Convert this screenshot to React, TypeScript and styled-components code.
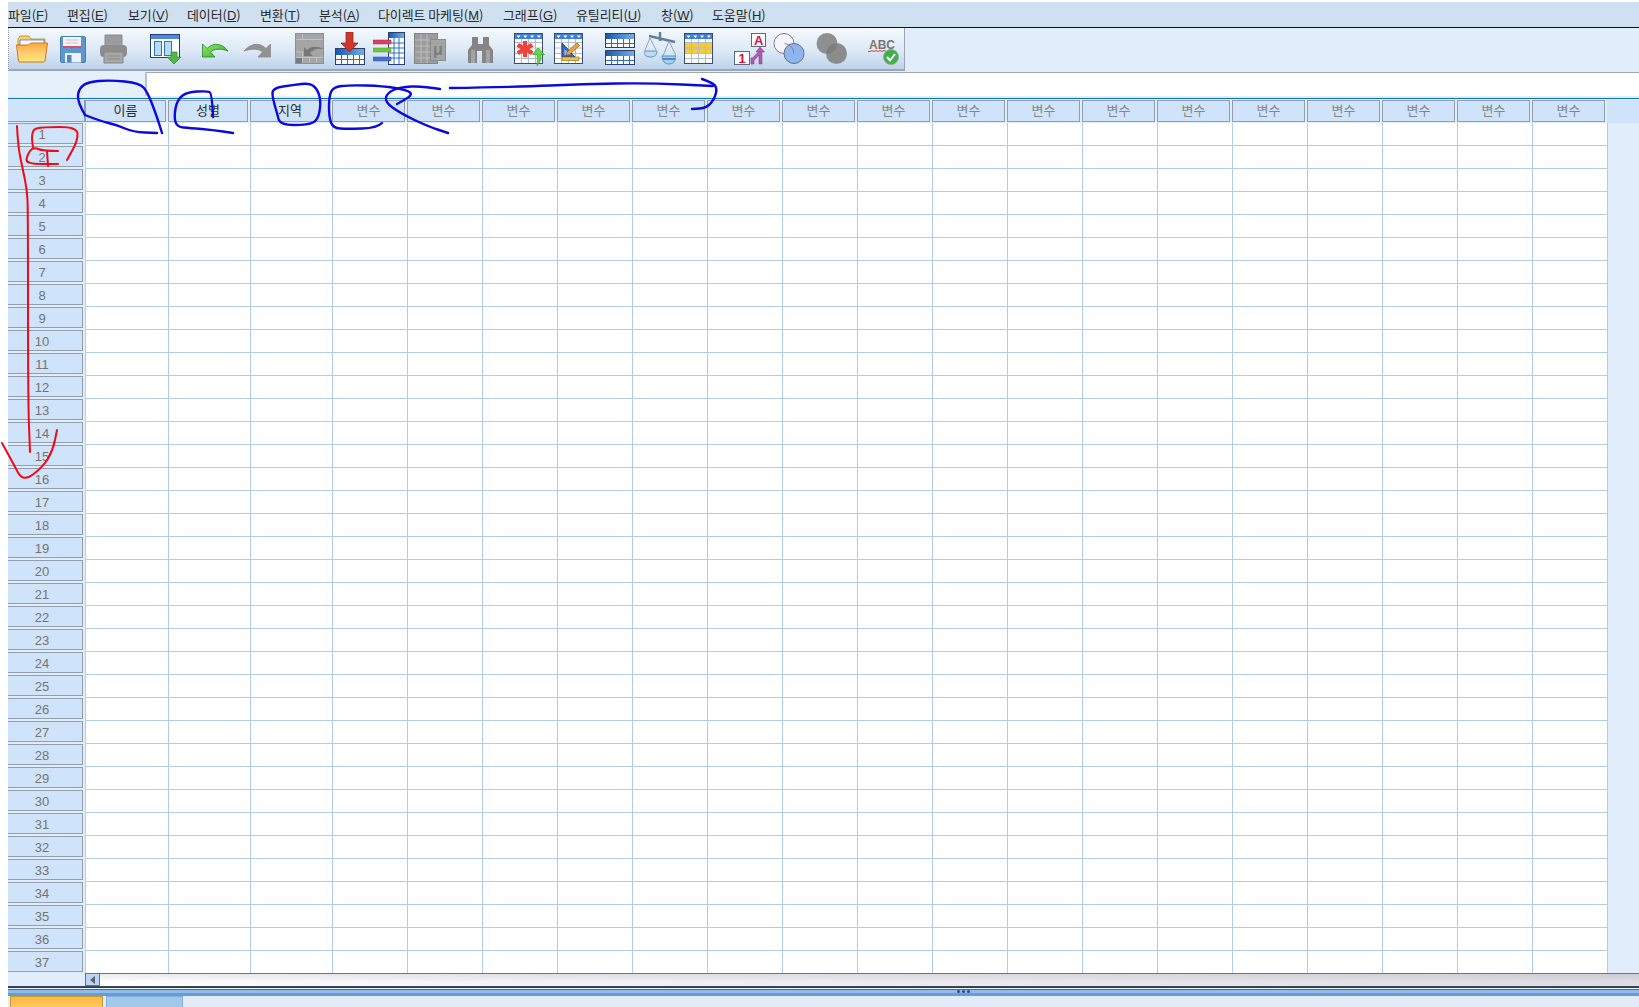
import React from "react";
import styled, { createGlobalStyle } from "styled-components";

const GlobalStyle = createGlobalStyle`
  html, body {
    margin: 0;
    padding: 0;
    background: #fff;
    overflow: hidden;
  }
`;

const KR = `"Noto Sans CJK KR", "Noto Sans", sans-serif`;

const MENUS: [string, string, number][] = [
  ["파일", "F", 59],
  ["편집", "E", 61],
  ["보기", "V", 59],
  ["데이터", "D", 73],
  ["변환", "T", 59],
  ["분석", "A", 59],
  ["다이렉트 마케팅", "M", 125],
  ["그래프", "G", 73],
  ["유틸리티", "U", 85],
  ["창", "W", 51],
  ["도움말", "H", 73],
];

const COLUMNS = [
  { label: "이름", width: 83, named: true },
  { label: "성별", width: 82, named: true },
  { label: "지역", width: 82, named: true },
  ...Array.from({ length: 17 }, () => ({ label: "변수", width: 75, named: false })),
];

const ROWS = Array.from({ length: 37 }, (_, i) => i + 1);

// 손으로 그린 주석 선을 부드럽게 이어준다
function stroke(points: number[][]) {
  let d = `M${points[0][0]} ${points[0][1]}`;
  for (let i = 1; i < points.length - 1; i++) {
    const mx = (points[i][0] + points[i + 1][0]) / 2;
    const my = (points[i][1] + points[i + 1][1]) / 2;
    d += ` Q${points[i][0]} ${points[i][1]} ${mx} ${my}`;
  }
  const last = points[points.length - 1];
  return `${d} L${last[0]} ${last[1]}`;
}

const BLUE_MARKS = [
  [[85,115],[78,103],[78,90],[87,82],[110,80],[140,83],[148,93],[157,117],[162,133]],
  [[85,115],[100,121],[117,125],[133,132],[157,133]],
  [[213,117],[212,93],[207,91],[187,92],[177,100],[174,117],[177,127],[190,128],[213,130],[233,133]],
  [[277,113],[272,97],[273,88],[293,85],[310,83],[318,90],[321,103],[318,120],[308,125],[280,125],[277,113]],
  [[382,123],[377,128],[347,129],[333,128],[329,117],[329,97],[333,87],[350,85],[383,86],[407,90],[413,95],[397,104]],
  [[440,89],[423,86],[400,87],[387,93],[385,102],[400,113],[427,126],[448,133]],
  [[450,88],[517,87],[583,84],[650,83],[713,86]],
  [[702,79],[713,83],[717,88],[715,98],[707,108],[692,109]],
];

const RED_MARKS = [
  [[33,147],[30,130],[43,127],[77,127],[78,140],[67,160]],
  [[58,151],[43,151],[33,147],[27,155],[26,164],[58,164]],
  [[47,151],[48,166]],
  [[17,126],[18,147],[23,170],[27,190],[28,210],[28,400],[30,452]],
  [[2,443],[13,463],[23,482],[43,467],[53,450],[57,430]],
];

const Page = styled.div`
  position: relative;
  width: 1639px;
  height: 1007px;
  padding: 2px 0 0 8px;
  box-sizing: border-box;
  display: flex;
  flex-direction: column;
  overflow: hidden;
  background: #fff;
`;

const MenuBar = styled.div`
  height: 25px;
  display: flex;
  align-items: center;
  background: #cfe0f1;
  border-bottom: 1px solid #111;
  flex: none;
`;

const MenuItem = styled.div<{ $w: number }>`
  width: ${(p) => p.$w}px;
  flex: none;
  font: 13px ${KR};
  letter-spacing: -0.1px;
  color: #2a2a2a;
  white-space: nowrap;
  line-height: 25px;
`;

const Mnemonic = styled.span`
  text-decoration: underline;
  font-family: "Liberation Sans", sans-serif;
`;

const ToolbarRow = styled.div`
  height: 44px;
  display: flex;
  align-items: flex-start;
  flex: none;
  background: #e1edfb;
`;

const Toolbar = styled.div`
  width: 897px;
  height: 43px;
  display: flex;
  align-items: center;
  padding-left: 7px;
  box-sizing: border-box;
  background: linear-gradient(#f4f9fe 0%, #dde9f6 55%, #bcd3eb 100%);
  border-right: 1px solid #9aa5b1;
  border-bottom: 2px solid #9ea7b1;
  border-left: 1px dotted #9aa5b1;
`;

const ToolIcon = styled.svg<{ $gap: number }>`
  width: 32px;
  height: 34px;
  flex: none;
  margin-left: ${(p) => p.$gap}px;
`;

const IconText = styled.text<{ $size: number; $color: string }>`
  font: bold ${(p) => p.$size}px "Liberation Sans", sans-serif;
  fill: ${(p) => p.$color};
`;

const EditorRow = styled.div`
  height: 26px;
  display: flex;
  flex: none;
`;

const CellLabel = styled.div`
  width: 137px;
  background: #e6f0fb;
  border-right: 2px solid #b9c2cc;
`;

const CellInput = styled.div`
  flex: 1;
  background: #fff;
  border-top: 1px solid #9ea7b1;
`;

const Sheet = styled.div`
  flex: none;
  display: flex;
  flex-direction: column;
  background: #e1edfb;
  border-top: 1px solid #0a6fc9;
  box-shadow: 0 -2px 0 #e2eefb;
`;

const HeaderRow = styled.div`
  display: flex;
  height: 24px;
  padding-top: 1px;
  box-sizing: border-box;
  flex: none;
`;

const Corner = styled.div`
  width: 77px;
  height: 22px;
  box-sizing: border-box;
  background: #cfe3fb;
  border-right: 1px solid #8f99a6;
  border-bottom: 1px solid #8f99a6;
  flex: none;
`;

const ColumnHead = styled.div<{ $w: number; $named: boolean }>`
  width: ${(p) => p.$w - 2}px;
  height: 22px;
  margin-right: 2px;
  padding-bottom: 2px;
  box-sizing: border-box;
  flex: none;
  display: flex;
  align-items: center;
  justify-content: center;
  background: #cfe3fb;
  border: 1px solid #939dab;
  font: 13px ${KR};
  line-height: 18px;
  color: ${(p) => (p.$named ? "#2c2c2c" : "#868686")};
`;

const HeadFiller = styled.div`
  flex: 1;
  height: 23px;
  background: #cfe3fb;
`;

const Row = styled.div`
  display: flex;
  height: 23px;
  flex: none;
`;

const RowHead = styled.div`
  width: 75px;
  height: 21px;
  padding: 2px 6px 0 0;
  box-sizing: border-box;
  flex: none;
  display: flex;
  align-items: center;
  justify-content: center;
  background: #cfe3fb;
  border: 1px solid #939dab;
  border-left: none;
  font: 13px "Liberation Sans", sans-serif;
  color: #747474;
`;

const RowGutter = styled.div`
  width: 2px;
  flex: none;
  border-right: 1px solid #b5d0ec;
`;

const Cell = styled.div<{ $w: number }>`
  width: ${(p) => p.$w}px;
  box-sizing: border-box;
  flex: none;
  background: #fff;
  border-right: 1px solid #b0cdea;
  border-bottom: 1px solid #b0cdea;
`;

const ScrollRow = styled.div`
  height: 12px;
  display: flex;
  flex: none;
  border-bottom: 1px solid #3d4a5c;
`;

const ScrollGutter = styled.div`
  width: 77px;
  flex: none;
`;

const ScrollArrow = styled.div`
  width: 15px;
  flex: none;
  box-sizing: border-box;
  background: #b9d4f5;
  border: 1px solid #2a7fd0;
  border-top: none;
  box-shadow: 0 -1px 0 #2a86dd;
  display: flex;
  align-items: center;
  justify-content: center;
  &::before {
    content: "";
    border-style: solid;
    border-width: 4px 5px 4px 0;
    border-color: transparent #5b6168 transparent transparent;
  }
`;

const ScrollTrack = styled.div`
  flex: 1;
  box-shadow: 0 -1px 0 #2a86dd;
  background:
    linear-gradient(rgba(120, 110, 130, 0.14), rgba(255, 255, 255, 0) 70%),
    linear-gradient(90deg, #fff 0%, #f4f3f5 25%, #dedbe3 100%);
`;

const Splitter = styled.div`
  position: relative;
  height: 9px;
  flex: none;
  background: linear-gradient(
    #16406f 0 1px,
    #f4f8fd 1px 2px,
    #0a7bdc 2px 3px,
    #8dbcee 3px 6px,
    #6c9bd2 6px 9px
  );
`;

const SplitDots = styled.div`
  position: absolute;
  left: 949px;
  top: 3px;
  width: 3px;
  height: 3px;
  border-radius: 50%;
  background: #2a4f96;
  box-shadow: 5px 0 0 #2a4f96, 10px 0 0 #2a4f96;
`;

const TabBar = styled.div`
  flex: 1;
  display: flex;
  gap: 3px;
  padding-left: 2px;
  align-items: flex-end;
  background: #e2ecf8;
`;

const Tab = styled.div<{ $active?: boolean }>`
  width: ${(p) => (p.$active ? 93 : 77)}px;
  height: 11px;
  box-sizing: border-box;
  background: ${(p) => (p.$active ? "linear-gradient(#ffb93f, #ffca63)" : "#a4c8e9")};
  border: 1px solid ${(p) => (p.$active ? "#c9972f" : "#7fb0e0")};
  border-bottom: none;
`;

const Marks = styled.svg`
  position: absolute;
  left: 0;
  top: 0;
  pointer-events: none;
`;

const MiniSheet = ({ hl }: { hl?: boolean }) => (
  <g>
    <rect x="1.500" y="1.500" width="28" height="30" fill="#fff" stroke="#3b4c6e" />
    {hl && <rect x="2" y="10" width="27" height="11" fill="#f5cc34" />}
    <path d="M2 10.500h27M2 16h27M2 21.500h27M2 26.500h27M8.500 7v24M15.500 7v24M22.500 7v24" stroke="#b4bbc6" fill="none" />
    <rect x="2" y="2" width="27" height="5" fill="#3f7fd6" />
    {[0, 1, 2, 3].map((i) => (
      <path key={i} d={`M${3.5 + i * 6.8} 3.500h4l-2 2.500z`} fill="#fff" />
    ))}
  </g>
);

const BlueTable = ({ y }: { y: number }) => (
  <g>
    <rect x="1.500" y={y + 0.5} width="29" height="14" fill="#fff" stroke="#2b3f70" />
    <rect x="2" y={y + 1} width="28" height="5" fill="url(#tableHead)" />
    <path
      d={`M2 ${y + 10.5}h28M7.500 ${y + 6}v8M13.500 ${y + 6}v8M19.500 ${y + 6}v8M25.500 ${y + 6}v8`}
      stroke="#2b6fc4"
      fill="none"
    />
  </g>
);

const ToolStrip = () => (
  <Toolbar>
    {/* 열기 */}
    <ToolIcon $gap={0} viewBox="0 0 32 34">
      <defs>
        <linearGradient id="folder" x1="0" y1="0" x2="0" y2="1">
          <stop offset="0" stopColor="#fda83c" />
          <stop offset=".6" stopColor="#ffd07a" />
          <stop offset="1" stopColor="#ffe96a" />
        </linearGradient>
        <linearGradient id="tableHead" x1="0" y1="0" x2="1" y2="0">
          <stop offset="0" stopColor="#1659ad" />
          <stop offset="1" stopColor="#74aee6" />
        </linearGradient>
      </defs>
      <path d="M2 7l2-3h9l2 3h14v6H2z" fill="#f7d070" stroke="#b98a28" strokeWidth=".8" />
      <path d="M4 8h24v6H4z" fill="#fff" stroke="#4f7fc0" strokeWidth=".8" />
      <path d="M0.500 13h12l2-2h17l-2.500 18a1.500 1.500 0 0 1-1.500 1H4a1.500 1.500 0 0 1-1.500-1z" fill="url(#folder)" stroke="#c9781a" />
    </ToolIcon>
    {/* 저장 */}
    <ToolIcon $gap={10} viewBox="0 0 32 34">
      <rect x="2.500" y="4.500" width="25" height="26" rx="1.500" fill="#5f95cf" stroke="#4a7db5" />
      <path d="M5 5h18v11H5z" fill="#f3f3f3" />
      <path d="M8 8h12M8 11h12" stroke="#c8c8c8" />
      <path d="M5 14h18v2H5z" fill="#d9506e" />
      <path d="M7 21h16v9.500H7z" fill="#edf2f7" />
      <path d="M9 23h4.500v7.500H9z" fill="#4f86c6" />
    </ToolIcon>
    {/* 인쇄 */}
    <ToolIcon $gap={8} viewBox="0 0 32 34">
      <path d="M7 3h17v11H7z" fill="#9c9c9c" stroke="#8a8a8a" />
      <rect x="2" y="13" width="27" height="12" rx="4" fill="#8d8d8d" />
      <path d="M6 20h19v11H6z" fill="#a8a8a8" stroke="#858585" />
      <path d="M9 24h13M9 27h13" stroke="#8a8a8a" />
    </ToolIcon>
    {/* 변수 이동 */}
    <ToolIcon $gap={19} viewBox="0 0 32 34">
      <rect x="1.500" y="2.500" width="29" height="23" fill="#fff" stroke="#2b3a78" />
      <rect x="2" y="3" width="28" height="4" fill="#4a8ad8" />
      <rect x="5.500" y="9.500" width="7" height="14" fill="#b8dcf8" stroke="#2b78c8" />
      <rect x="15.500" y="9.500" width="7" height="14" fill="#b8dcf8" stroke="#2b78c8" />
      <path d="M22 20h6v5h4l-7 7-7-7h4z" fill="#4fb848" stroke="#2a8a30" strokeWidth=".7" />
    </ToolIcon>
    {/* 실행 취소 */}
    <ToolIcon $gap={18} viewBox="0 0 32 34">
      <defs>
        <linearGradient id="undo" x1="0" y1="0" x2="1" y2="1">
          <stop offset="0" stopColor="#9be864" />
          <stop offset="1" stopColor="#2da92d" />
        </linearGradient>
      </defs>
      <path d="M3.500 12v13H16l-4.500-5C15 16.500 22 16.500 29 19 24 12 15 9.500 8 16.500z" fill="url(#undo)" stroke="#1f8a2a" strokeWidth=".8" />
    </ToolIcon>
    {/* 다시 실행 */}
    <ToolIcon $gap={10} viewBox="0 0 32 34">
      <path d="M29.500 12v13H17l4.500-5C18 16.500 11 16.500 3 19 9 12 18 9.500 25 16.500z" fill="#929292" stroke="#8a8a8a" strokeWidth=".8" />
    </ToolIcon>
    {/* 케이스 이동 */}
    <ToolIcon $gap={21} viewBox="0 0 32 34">
      <rect x="1.500" y="1.500" width="28" height="30" fill="#a5a5a5" stroke="#8f8f8f" />
      <path d="M2 7.500h27M2 25.500h27M2 20h6M8.500 20v11M15.500 25v6M22.500 25v6M8.500 2v5" stroke="#c2c2c2" fill="none" />
      <path d="M10 24v-9l3 3c4-4 10-4 17-1-6-1-11 0-14 4l3 3z" fill="#777" />
      <rect x="2" y="26" width="6" height="5" fill="#7b7b7b" />
    </ToolIcon>
    {/* 케이스 삽입 */}
    <ToolIcon $gap={8} viewBox="0 0 32 34">
      <rect x="1.500" y="16.500" width="29" height="16" fill="#fff" stroke="#2b3f70" />
      <rect x="2" y="17" width="28" height="6" fill="url(#tableHead)" />
      <path d="M2 27.500h28M7.500 23v9M13.500 23v9M19.500 23v9M25.500 23v9" stroke="#2b6fc4" fill="none" />
      <path d="M12 0h7v11h5l-8.500 9L7 11h5z" fill="#cf352c" stroke="#8a1f18" strokeWidth=".7" />
    </ToolIcon>
    {/* 변수 삽입 */}
    <ToolIcon $gap={7} viewBox="0 0 32 34">
      <rect x="15.500" y="0.500" width="16" height="32" fill="#fff" stroke="#2b3f70" />
      <rect x="16" y="1" width="15" height="5" fill="url(#tableHead)" />
      <path d="M15 11h16M15 16h16M15 21h16M15 26h16M21 6v26M26 6v26" stroke="#2b6fc4" fill="none" />
      <rect x="0" y="8" width="18" height="4" fill="#dc4060" stroke="#b02a48" strokeWidth=".5" />
      <rect x="0" y="16" width="18" height="4" fill="#6cc83e" stroke="#4a9c2a" strokeWidth=".5" />
      <rect x="0" y="25" width="18" height="4" fill="#4a6cd8" stroke="#3050a8" strokeWidth=".5" />
    </ToolIcon>
    {/* 파일 분할 */}
    <ToolIcon $gap={9} viewBox="0 0 32 34">
      <rect x="0.500" y="1.500" width="23" height="30" fill="#9c9c9c" stroke="#858585" />
      <path d="M1 8h22M1 14h22M1 20h22M1 26h22M7 2v29M13 2v29" stroke="#bcbcbc" fill="none" />
      <rect x="16.500" y="7.500" width="15" height="21" fill="#a4a4a4" stroke="#8c8c8c" />
      <IconText x="19" y="23" $size={16} $color="#7c7c7c">μ</IconText>
    </ToolIcon>
    {/* 찾기 */}
    <ToolIcon $gap={18} viewBox="0 0 32 34">
      <path d="M8 5h6v7h5V5h6v8l4 5v13H18V19h-5v12H4V18l4-5z" fill="#858585" />
      <path d="M7 18h4v13H7zM22 18h4v13h-4z" fill="#a4a4a4" />
    </ToolIcon>
    {/* 케이스 찾기 */}
    <ToolIcon $gap={17} viewBox="0 0 32 34">
      <MiniSheet />
      <path d="M10 9v4.500L6 11l-2.500 3.500L7.500 17l-4 2.500L6 23l4-2.500V25h4v-4.500l4 2.500 2.500-3.500-4-2.500 4-2.500L18 11l-4 2.500V9z" fill="#f2403a" />
      <path d="M25 16l6.500 6.500H28c0 5-1 8.500-4 11 .5-4 .5-7.500 0-11h-4.500z" fill="#63d840" stroke="#2c9a30" strokeWidth=".7" />
    </ToolIcon>
    {/* 측정 */}
    <ToolIcon $gap={8} viewBox="0 0 32 34">
      <MiniSheet />
      <path d="M9 11v14h13z" fill="#3a68c8" stroke="#1f3e88" />
      <path d="M11.500 17v6h6z" fill="#9cc0ee" />
      <rect x="9" y="25" width="17" height="3.500" fill="#f0c040" stroke="#8a6a10" strokeWidth=".6" />
      <path d="M14 20l10-9 2.500 2.500-10 9-3.500 1z" fill="#eaa636" stroke="#6a4410" strokeWidth=".6" />
    </ToolIcon>
    {/* 케이스 목록 */}
    <ToolIcon $gap={19} viewBox="0 0 32 34">
      <BlueTable y={1} />
      <BlueTable y={18} />
    </ToolIcon>
    {/* 가중값 */}
    <ToolIcon $gap={8} viewBox="0 0 32 34">
      <path d="M16 0v9M5 4l26 6" stroke="#5f8098" strokeWidth="2.500" fill="none" />
      <path d="M6 6L1 18M6 6l6 12M25 9l-6 15M25 9l7 15" stroke="#8fa6bb" fill="none" />
      <path d="M0 19h13c0 4-2.500 6-6.500 6S0 23 0 19z" fill="#bcdcf0" stroke="#5b92b8" />
      <path d="M18 24h14c0 5-3 8-7 8s-7-3-7-8z" fill="#a4d0ec" stroke="#5b92b8" />
      <path d="M19 27h12" stroke="#2b78c8" strokeWidth="1.500" />
    </ToolIcon>
    {/* 케이스 선택 */}
    <ToolIcon $gap={7} viewBox="0 0 32 34">
      <MiniSheet hl />
    </ToolIcon>
    {/* 값 레이블 */}
    <ToolIcon $gap={19} viewBox="0 0 32 34">
      <rect x="17.500" y="1.500" width="14" height="13" fill="#fff" stroke="#5a6a80" />
      <IconText x="20" y="13" $size={13} $color="#d8103c">A</IconText>
      <rect x="0.500" y="19.500" width="15" height="13" fill="#fff" stroke="#5a6a80" />
      <IconText x="4.500" y="31" $size={13} $color="#d8103c">1</IconText>
      <path d="M26 15l4.500 5H28v12h-3v-9l-5 5.500V32h-3v-6h1.500l6-6H22z" fill="#b658b0" stroke="#7d3078" strokeWidth=".5" />
    </ToolIcon>
    {/* 세트 사용 */}
    <ToolIcon $gap={7} viewBox="0 0 32 34">
      <circle cx="11" cy="11.500" r="10" fill="#f6f6fa" stroke="#80808c" />
      <circle cx="21" cy="21.500" r="10" fill="#8fb5ee" stroke="#5f6f95" />
      <path d="M11.500 11.600a10 10 0 0 1 9.400 9.900" stroke="#80808c" fill="none" />
    </ToolIcon>
    {/* 세트 표시 */}
    <ToolIcon $gap={10} viewBox="0 0 32 34">
      <circle cx="12" cy="11.500" r="10.500" fill="#8f8f8f" />
      <circle cx="21.500" cy="21.500" r="10.500" fill="#8c8c8c" />
      <path d="M11.500 21.900A10.500 10.500 0 0 1 22 11.100 10.500 10.500 0 0 1 11.500 21.900z" fill="#7e7e7e" />
    </ToolIcon>
    {/* 맞춤법 */}
    <ToolIcon $gap={21} viewBox="0 0 32 34">
      <IconText x="1" y="17" $size={12} $color="#767676">ABC</IconText>
      <path d="M0 19.500h2l2-1 2 1 2-1 2 1 2-1 2 1 2-1 2 1" stroke="#d84030" fill="none" />
      <circle cx="23" cy="25" r="7.500" fill="#3fb04a" stroke="#8aa89a" />
      <path d="M19 25l3 3.500 5-6.500" stroke="#fff" strokeWidth="2" fill="none" />
    </ToolIcon>
  </Toolbar>
);

export default function App() {
  return (
    <Page>
      <GlobalStyle />
      <MenuBar>
        {MENUS.map(([name, key, w]) => (
          <MenuItem key={key} $w={w}>
            {name}(<Mnemonic>{key}</Mnemonic>)
          </MenuItem>
        ))}
      </MenuBar>
      <ToolbarRow>
        <ToolStrip />
      </ToolbarRow>
      <EditorRow>
        <CellLabel />
        <CellInput />
      </EditorRow>
      <Sheet>
        <HeaderRow>
          <Corner />
          {COLUMNS.map((c, i) => (
            <ColumnHead key={i} $w={c.width} $named={c.named}>
              {c.label}
            </ColumnHead>
          ))}
          <HeadFiller />
        </HeaderRow>
        {ROWS.map((r) => (
          <Row key={r}>
            <RowHead>{r}</RowHead>
            <RowGutter />
            {COLUMNS.map((c, i) => (
              <Cell key={i} $w={c.width} />
            ))}
          </Row>
        ))}
        <ScrollRow>
          <ScrollGutter />
          <ScrollArrow />
          <ScrollTrack />
        </ScrollRow>
      </Sheet>
      <Splitter>
        <SplitDots />
      </Splitter>
      <TabBar>
        <Tab $active />
        <Tab />
      </TabBar>
      <Marks width="1639" height="1007" viewBox="0 0 1639 1007" fill="none" strokeLinecap="round" strokeLinejoin="round">
        {BLUE_MARKS.map((m, i) => (
          <path key={i} d={stroke(m)} stroke="#0a0ae0" strokeWidth="2.4" />
        ))}
        {RED_MARKS.map((m, i) => (
          <path key={i} d={stroke(m)} stroke="#f00a14" strokeWidth="2" />
        ))}
      </Marks>
    </Page>
  );
}
